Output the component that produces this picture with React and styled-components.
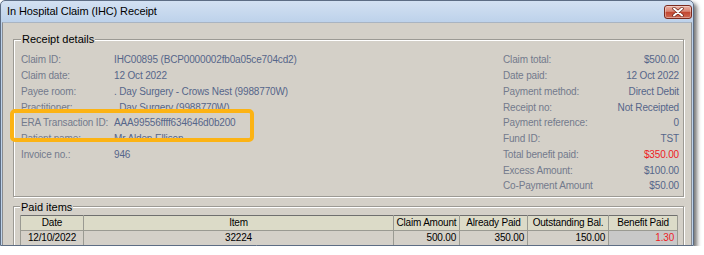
import React from "react";
import styled, { createGlobalStyle } from "styled-components";

const Global = createGlobalStyle`
  html, body { margin: 0; padding: 0; background: #ffffff; }
  body { font-family: "Liberation Sans", Arial, sans-serif; }
  * { box-sizing: border-box; }
`;

const Window = styled.div`
  position: relative;
  width: 694px;
  height: 246px;
  overflow: hidden;
  border: 1px solid #5d6d84;
  border-radius: 5px 5px 0 0;
  background: linear-gradient(#d3e1f2 0px, #bcd1ea 22px, #bfd3ea 100%);
  box-shadow: 3px 3px 4px rgba(0, 0, 0, 0.55);
  display: flex;
  flex-direction: column;
`;

const TitleBar = styled.div`
  height: 21px;
  flex: none;
  display: flex;
  align-items: flex-start;
  justify-content: space-between;
  padding: 0 1px 0 6px;
`;

const Title = styled.div`
  font-size: 11px;
  letter-spacing: -0.1px;
  line-height: 21px;
  color: #000;
`;

const CloseButton = styled.div`
  margin-top: 4px;
  width: 28px;
  height: 14px;
  border: 1px solid #7b2a1e;
  border-radius: 3px;
  background: linear-gradient(#eab0a2 0%, #d98574 45%, #c2452f 50%, #cf6a55 100%);
  box-shadow: inset 0 0 0 1px rgba(255, 255, 255, 0.35);
  display: flex;
  align-items: center;
  justify-content: center;
`;

const Client = styled.div`
  flex: 1;
  margin: 0 1px;
  border-left: 1px solid #8a8c90;
  border-right: 1px solid #8a8c90;
  border-top: 1px solid #a9b4c2;
  background: #d4d0c8;
  padding: 10px 7px 0 10px;
  display: flex;
  flex-direction: column;
  gap: 4px;
`;

const Group = styled.fieldset`
  margin: 0;
  min-width: 0;
  border: 1px solid #9c9a94;
  box-shadow: inset 1px 1px 0 #ffffff, 1px 1px 0 #ffffff;
  padding: ${(p) => p.$pad};
`;

const Legend = styled.legend`
  padding: 0 1px;
  font-size: 11px;
  line-height: 12px;
  color: #000;
  background: #d4d0c8;
`;

const Details = styled.div`
  display: flex;
  justify-content: space-between;
  align-items: flex-start;
`;

const Pairs = styled.div`
  display: grid;
  grid-template-columns: ${(p) => p.$cols};
  width: ${(p) => p.$width || "auto"};
  grid-auto-rows: 15.75px;
  align-items: center;
  font-size: 10px;
  letter-spacing: -0.15px;
`;

const Label = styled.div`
  color: #737a8c;
  white-space: nowrap;
`;

const Value = styled.div`
  color: ${(p) => (p.$red ? "#ee1c25" : "#56668a")};
  text-align: ${(p) => (p.$right ? "right" : "left")};
  white-space: nowrap;
`;

const Table = styled.table`
  border-collapse: collapse;
  table-layout: fixed;
  width: 657px;
  font-size: 10px;
  letter-spacing: -0.2px;
  color: #000;
  border-top: 1px solid #6f6f6f;
  border-left: 1px solid #6f6f6f;
`;

const Th = styled.th`
  height: 15px;
  padding: 0;
  font-weight: normal;
  text-align: center;
  background: #dcdbc8;
  border: 1px solid #9a9a92;
  border-top: none;
  line-height: 14px;
`;

const Td = styled.td`
  height: 15px;
  padding: 0 3px;
  text-align: ${(p) => p.$align || "right"};
  background: ${(p) => (p.$sel ? "#c8c8c8" : "#d4d0c8")};
  color: ${(p) => (p.$red ? "#ee1c25" : "#000")};
  border: 1px solid #9a9a92;
  line-height: 14px;
`;

const Highlight = styled.div`
  position: absolute;
  left: 9px;
  top: 108px;
  width: 244px;
  height: 33px;
  border: 4px solid #fcb314;
  border-radius: 5px;
  pointer-events: none;
`;

const left = [
  ["Claim ID:", "IHC00895 (BCP0000002fb0a05ce704cd2)"],
  ["Claim date:", "12 Oct 2022"],
  ["Payee room:", ". Day Surgery - Crows Nest (9988770W)"],
  ["Practitioner:", ". Day Surgery (9988770W)"],
  ["ERA Transaction ID:", "AAA99556ffff634646d0b200"],
  ["Patient name:", "Mr Alden Ellison"],
  ["Invoice no.:", "946"],
];

const right = [
  ["Claim total:", "$500.00"],
  ["Date paid:", "12 Oct 2022"],
  ["Payment method:", "Direct Debit"],
  ["Receipt no:", "Not Receipted"],
  ["Payment reference:", "0"],
  ["Fund ID:", "TST"],
  ["Total benefit paid:", "$350.00", true],
  ["Excess Amount:", "$100.00"],
  ["Co-Payment Amount", "$50.00"],
];

const cols = [
  ["Date", 63],
  ["Item", 310],
  ["Claim Amount", 66],
  ["Already Paid", 68],
  ["Outstanding Bal.", 81],
  ["Benefit Paid", 69],
];

export default function App() {
  return (
    <>
      <Global />
      <Window>
        <TitleBar>
          <Title>In Hospital Claim (IHC) Receipt</Title>
          <CloseButton>
            <svg width="12" height="10" viewBox="0 0 12 10">
              <path d="M2 1.5 L10 8.5 M10 1.5 L2 8.5" stroke="#6b2418" strokeWidth="3.4" strokeLinecap="round" />
              <path d="M2 1.5 L10 8.5 M10 1.5 L2 8.5" stroke="#ffffff" strokeWidth="2" strokeLinecap="round" />
            </svg>
          </CloseButton>
        </TitleBar>
        <Client>
          <Group $pad="7px 4px 2px 7px">
            <Legend>Receipt details</Legend>
            <Details>
              <Pairs $cols="93px auto">
                {left.map(([l, v]) => (
                  <React.Fragment key={l}>
                    <Label>{l}</Label>
                    <Value>{v}</Value>
                  </React.Fragment>
                ))}
              </Pairs>
              <Pairs $cols="1fr auto" $width="176px">
                {right.map(([l, v, red]) => (
                  <React.Fragment key={l}>
                    <Label>{l}</Label>
                    <Value $right $red={red}>{v}</Value>
                  </React.Fragment>
                ))}
              </Pairs>
            </Details>
          </Group>
          <Group $pad="2px 6px 4px 6px">
            <Legend>Paid items</Legend>
            <Table>
              <colgroup>
                {cols.map(([n, w]) => (
                  <col key={n} style={{ width: w }} />
                ))}
              </colgroup>
              <thead>
                <tr>
                  {cols.map(([n]) => (
                    <Th key={n}>{n}</Th>
                  ))}
                </tr>
              </thead>
              <tbody>
                <tr>
                  <Td $align="center">12/10/2022</Td>
                  <Td $align="center">32224</Td>
                  <Td>500.00</Td>
                  <Td>350.00</Td>
                  <Td>150.00</Td>
                  <Td $sel $red>1.30</Td>
                </tr>
              </tbody>
            </Table>
          </Group>
        </Client>
        <Highlight />
      </Window>
    </>
  );
}
